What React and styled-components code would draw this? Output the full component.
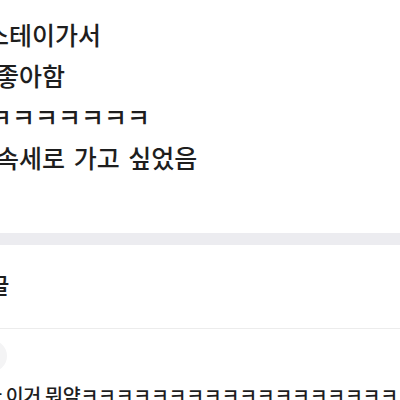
import styled, { createGlobalStyle } from "styled-components";

const GlobalStyle = createGlobalStyle`
  html, body {
    margin: 0;
    padding: 0;
    background: #ffffff;
  }
  body {
    font-family: "Noto Sans CJK KR", sans-serif;
    color: #1e1e1e;
    overflow: hidden;
  }
`;

const Page = styled.div`
  width: 400px;
  height: 400px;
  overflow: hidden;
  display: flex;
  flex-direction: column;
  background: #fff;
`;

const PostBody = styled.div`
  display: flex;
  flex-direction: column;
  padding-top: 14px;
  height: 219px;
  flex-shrink: 0;
`;

const Line = styled.p`
  margin: 0 0 0 ${(p) => p.$shift}px;
  font-size: 25px;
  line-height: 41px;
  font-weight: 500;
  word-spacing: 3px;
  white-space: nowrap;
`;

const SectionGap = styled.div`
  height: 12px;
  background: #ececf0;
  flex-shrink: 0;
`;

const CommentHeader = styled.div`
  height: 84px;
  box-sizing: border-box;
  padding-bottom: 6px;
  display: flex;
  align-items: center;
  border-bottom: 1px solid #ececec;
  flex-shrink: 0;
`;

const CommentTitle = styled.h3`
  margin: 0 0 0 -33px;
  font-size: 23px;
  font-weight: 500;
  white-space: nowrap;
`;

const CommentItem = styled.div`
  display: flex;
  flex-direction: column;
  padding-top: 11px;
  gap: 10px;
`;

const Avatar = styled.div`
  width: 32px;
  height: 32px;
  border-radius: 50%;
  background: #f4f4f5;
  margin-left: -25px;
`;

const CommentText = styled.p`
  margin: 0 0 0 -16px;
  font-size: 19.5px;
  line-height: 26px;
  font-weight: 500;
  letter-spacing: -0.3px;
  white-space: nowrap;
`;

export default function App() {
  const lines = [
    { text: "스테이가서", shift: -14 },
    { text: "좋아함", shift: -4 },
    { text: "ㅋㅋㅋㅋㅋㅋㅋ", shift: -11 },
    { text: "속세로 가고 싶었음", shift: -4 },
  ];

  return (
    <Page>
      <GlobalStyle />
      <PostBody>
        {lines.map((line, index) => (
          <Line key={index} $shift={line.shift}>
            {line.text}
          </Line>
        ))}
      </PostBody>
      <SectionGap />
      <CommentHeader>
        <CommentTitle>댓글</CommentTitle>
      </CommentHeader>
      <CommentItem>
        <Avatar />
        <CommentText>아 이거 뭐얌ㅋㅋㅋㅋㅋㅋㅋㅋㅋㅋㅋㅋㅋㅋㅋㅋㅋㅋㅋㅋㅋ</CommentText>
      </CommentItem>
    </Page>
  );
}
